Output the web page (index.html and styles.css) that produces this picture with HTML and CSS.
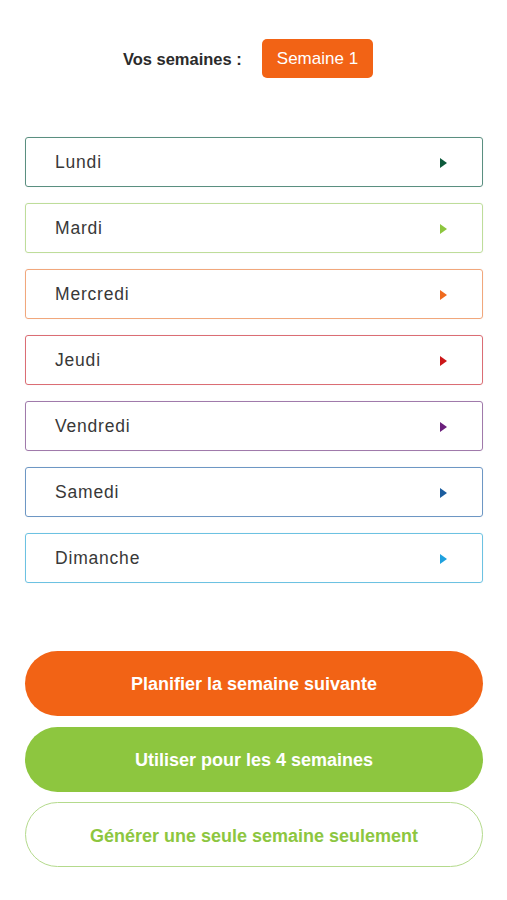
FILE: index.html
```html
<!DOCTYPE html>
<html lang="fr">
<head>
    <meta charset="UTF-8">
    <meta name="viewport" content="width=device-width, initial-scale=1.0">
    <title>Vos semaines</title>
    <link rel="stylesheet" href="styles.css">
</head>
<body>
    <div class="page">
        <!-- Week selector -->
        <div class="weeks">
            <span class="weeks-label">Vos semaines :</span>
            <button class="week-tab">Semaine 1</button>
        </div>

        <!-- Days of the week -->
        <div class="days">
            <div class="day day-lundi"><span>Lundi</span><i class="arrow"></i></div>
            <div class="day day-mardi"><span>Mardi</span><i class="arrow"></i></div>
            <div class="day day-mercredi"><span>Mercredi</span><i class="arrow"></i></div>
            <div class="day day-jeudi"><span>Jeudi</span><i class="arrow"></i></div>
            <div class="day day-vendredi"><span>Vendredi</span><i class="arrow"></i></div>
            <div class="day day-samedi"><span>Samedi</span><i class="arrow"></i></div>
            <div class="day day-dimanche"><span>Dimanche</span><i class="arrow"></i></div>
        </div>

        <!-- Actions -->
        <div class="actions">
            <button class="pill pill-orange">Planifier la semaine suivante</button>
            <button class="pill pill-green">Utiliser pour les 4 semaines</button>
            <button class="pill pill-outline">Générer une seule semaine seulement</button>
        </div>
    </div>
</body>
</html>
```

FILE: styles.css
```css
body { margin: 0; background: #fff; font-family: "Liberation Sans", Arial, sans-serif; color: #333; }

.page { padding: 39px 24px 0 25px; }

/* Week selector row */
.weeks { display: flex; align-items: center; justify-content: center; gap: 20px; padding-right: 12px; }
.weeks-label { font-size: 16.5px; font-weight: bold; color: #2b2b2b; padding-top: 1px; }
.week-tab {
    background: #f26315; color: #fff; border: none; border-radius: 5px;
    height: 39px; padding: 0 15px; font-family: inherit; font-size: 17px;
}

/* Day list */
.days { display: flex; flex-direction: column; gap: 16px; margin-top: 59px; }
.day {
    height: 50px; box-sizing: border-box; border: 1.5px solid #ccc; border-radius: 3px;
    display: flex; align-items: center; justify-content: space-between;
    padding: 1px 35px 0 29px; font-size: 17.5px; letter-spacing: 0.8px; color: #383838;
    box-shadow: 0 0 2px rgba(0, 0, 0, 0.06);
}
.arrow { width: 0; height: 0; border-top: 5.5px solid transparent; border-bottom: 5.5px solid transparent; border-left: 7px solid #333; }

.day-lundi { border-color: #5a8f80; }
.day-lundi .arrow { border-left-color: #0d5a3c; }
.day-mardi { border-color: #bedd9a; }
.day-mardi .arrow { border-left-color: #8dc63f; }
.day-mercredi { border-color: #f1a77c; }
.day-mercredi .arrow { border-left-color: #ef6a1e; }
.day-jeudi { border-color: #db6d74; }
.day-jeudi .arrow { border-left-color: #cc1719; }
.day-vendredi { border-color: #a07aab; }
.day-vendredi .arrow { border-left-color: #6b1f7c; }
.day-samedi { border-color: #6d97c4; }
.day-samedi .arrow { border-left-color: #1b5d9e; }
.day-dimanche { border-color: #6cc2e2; }
.day-dimanche .arrow { border-left-color: #1fa1de; }

/* Bottom buttons */
.actions { display: flex; flex-direction: column; gap: 11px; margin-top: 68px; }
.pill {
    height: 65px; border-radius: 33px; border: none; font-family: inherit;
    font-size: 18px; font-weight: bold; color: #fff; padding-top: 2px;
}
.pill-orange { background: #f26315; }
.pill-green { background: #8dc63f; }
.pill-outline { background: #fff; border: 1.5px solid #b4da8c; color: #8dc63f; margin-top: -1px; padding-top: 4px; }
```
